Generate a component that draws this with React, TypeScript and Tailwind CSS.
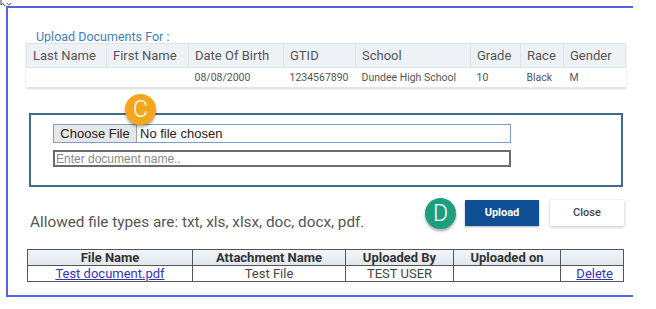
import React from "react";

const students = [
  {
    lastName: "",
    firstName: "",
    dob: "08/08/2000",
    gtid: "1234567890",
    school: "Dundee High School",
    grade: "10",
    race: "Black",
    gender: "M",
  },
];

const cols = [
  { label: "Last Name", key: "lastName", w: "w-[80px]" },
  { label: "First Name", key: "firstName", w: "w-[82px]" },
  { label: "Date Of Birth", key: "dob", w: "w-[95px]" },
  { label: "GTID", key: "gtid", w: "w-[72px]" },
  { label: "School", key: "school", w: "w-[115px]" },
  { label: "Grade", key: "grade", w: "w-[50px]" },
  { label: "Race", key: "race", w: "w-[43px]" },
  { label: "Gender", key: "gender", w: "w-[62px]" },
] as const;

function Badge({ letter, className }: { letter: string; className: string }) {
  return (
    <span
      className={`absolute flex h-[31px] w-[31px] items-center justify-center rounded-full text-[23px] font-light leading-none text-white shadow-[0_2px_3px_rgba(0,0,0,0.35)] ${className}`}
    >
      {letter}
    </span>
  );
}

export default function App() {
  return (
    <div className="relative h-[309px] w-[656px] bg-white font-['Roboto',sans-serif]">
      <svg className="absolute left-0 top-0" width="12" height="7" viewBox="0 0 12 7">
        <path d="M1 0 L1 5 L3 3.5 L5 6" fill="none" stroke="#444" strokeWidth="1" />
        <path d="M7 3 Q9 7 11 3" fill="none" stroke="#666" strokeWidth="1" />
      </svg>

      <div className="absolute left-[6px] top-[6px] h-[291px] w-[627px] border-b-2 border-l-2 border-t-2 border-[#5064f0]">
        <div className="flex flex-col">
          <p className="ml-[28px] mt-[22px] text-[12.5px] leading-[14px] text-[#3f7fb5]">
            Upload Documents For :
          </p>

          <table className="ml-[18px] mt-[-1px] w-[599px] table-fixed border-collapse shadow-[0_1px_2px_rgba(0,0,0,0.15)]">
            <thead>
              <tr className="h-[24px] bg-[#eef2f6]">
                {cols.map((c) => (
                  <th
                    key={c.key}
                    className={`${c.w} border border-[#dde3e9] px-[6px] text-left text-[13px] font-normal text-[#555]`}
                  >
                    {c.label}
                  </th>
                ))}
              </tr>
            </thead>
            <tbody>
              {students.map((s, i) => (
                <tr key={i} className="h-[20px]">
                  {cols.map((c) => (
                    <td
                      key={c.key}
                      className="border-b border-[#e2e6ea] px-[6px] text-[10.5px] text-[#555]"
                    >
                      {s[c.key]}
                    </td>
                  ))}
                </tr>
              ))}
            </tbody>
          </table>

          <div className="relative ml-[21px] mt-[25px] h-[74px] w-[594px] border-2 border-[#46698a] px-[22px] pt-[9px] font-['Liberation_Sans',Arial,sans-serif]">
            <Badge letter="C" className="left-[94px] top-[-21px] bg-[#f3a81c] font-['Roboto',sans-serif]" />
            <div className="flex h-[19px] w-[458px] items-center border border-[#7f9fc9]">
              <span className="flex h-full w-[83px] items-center justify-center border-r border-[#9aa4b0] bg-[#e6e6e6] text-[13px] text-[#222]">
                Choose File
              </span>
              <span className="pl-[3px] text-[13px] text-[#222]">No file chosen</span>
            </div>
            <div className="mt-[7px] flex h-[17px] w-[458px] items-center border-2 border-[#6b6b6b] pl-[1px] text-[12px] text-[#888]">
              Enter document name..
            </div>
          </div>

          <div className="mt-[10px] flex h-[32px] items-center">
            <p className="ml-[22px] mt-[18px] text-[15.3px] text-[#555]">
              Allowed file types are: txt, xls, xlsx, doc, docx, pdf.
            </p>
            <div className="relative ml-auto mr-[9px] flex gap-[11px]">
              <Badge letter="D" className="left-[-40px] top-[-2px] bg-[#1b9f7f]" />
              <button className="h-[26px] w-[74px] bg-[#0e4f96] text-[11px] font-bold text-white shadow-[0_1px_2px_rgba(0,0,0,0.3)]">
                Upload
              </button>
              <button className="h-[26px] w-[74px] bg-white text-[11px] font-medium text-[#444] shadow-[0_1px_3px_rgba(0,0,0,0.25)]">
                Close
              </button>
            </div>
          </div>

          <table className="ml-[19px] mt-[20px] w-[597px] table-fixed border-collapse border border-[#555] text-[13px]">
            <thead>
              <tr className="h-[16px] bg-gradient-to-b from-[#f3f6f9] to-[#dfe6ee]">
                <th className="w-[165px] border border-[#555] font-bold leading-[14px] text-[#333]">File Name</th>
                <th className="w-[153px] border border-[#555] font-bold leading-[14px] text-[#333]">Attachment Name</th>
                <th className="w-[108px] border border-[#555] font-bold leading-[14px] text-[#333]">Uploaded By</th>
                <th className="w-[107px] border border-[#555] font-bold leading-[14px] text-[#333]">Uploaded on</th>
                <th className="border border-[#555]"></th>
              </tr>
            </thead>
            <tbody>
              <tr className="h-[16px]">
                <td className="border border-[#555] text-center leading-[14px]">
                  <a className="text-[#3535b0] underline">Test document.pdf</a>
                </td>
                <td className="border border-[#555] text-center leading-[14px] text-[#444]">Test File</td>
                <td className="border border-[#555] text-center leading-[14px] text-[#444]">TEST USER</td>
                <td className="border border-[#555]"></td>
                <td className="border border-[#555] pr-[10px] text-right leading-[14px]">
                  <a className="text-[#3535b0] underline">Delete</a>
                </td>
              </tr>
            </tbody>
          </table>
        </div>
      </div>
    </div>
  );
}
